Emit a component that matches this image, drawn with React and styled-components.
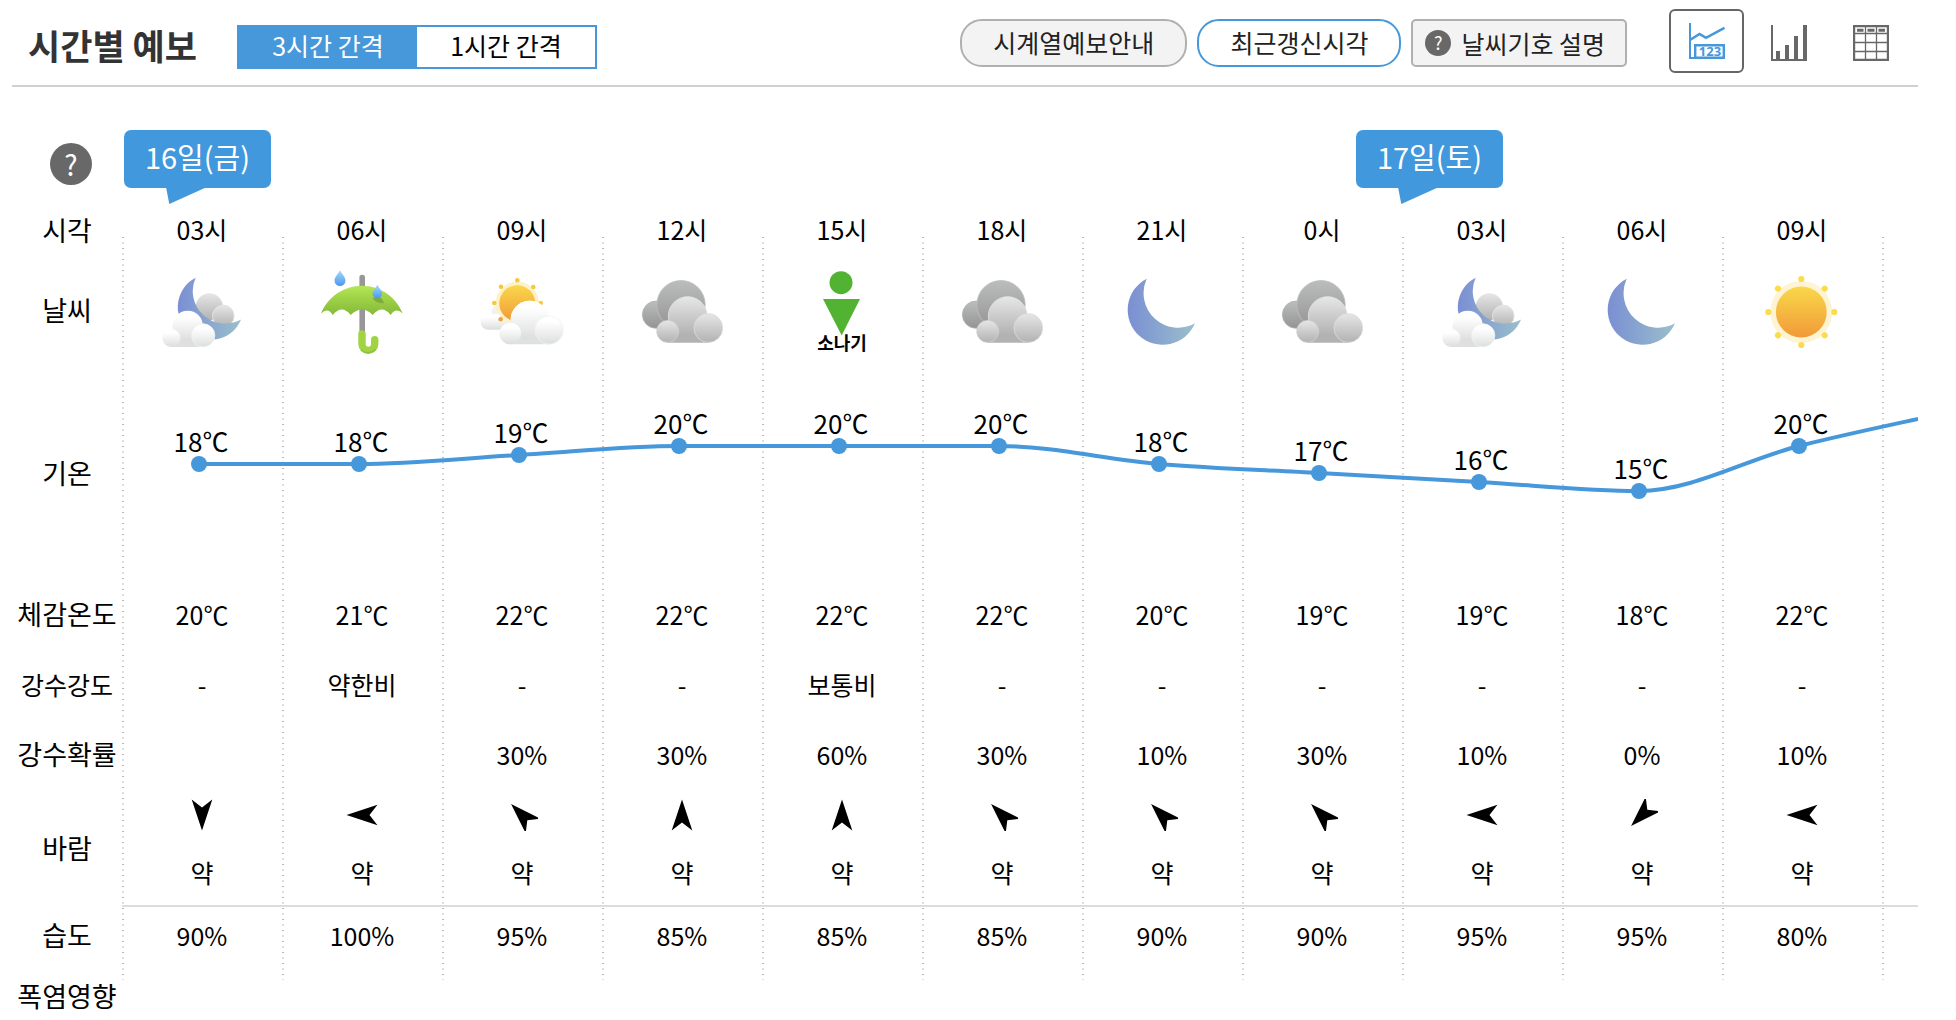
import { useState } from "react";
import styled, { createGlobalStyle } from "styled-components";

const COLUMN_WIDTH = 160;

const forecasts = [
  { time: "03시", weather: "moonCloud", temp: 18, feel: 20, rain: "-", pop: "", wind: 180, humidity: 90 },
  { time: "06시", weather: "rain", temp: 18, feel: 21, rain: "약한비", pop: "", wind: 270, humidity: 100 },
  { time: "09시", weather: "sunCloud", temp: 19, feel: 22, rain: "-", pop: "30%", wind: 315, humidity: 95 },
  { time: "12시", weather: "cloudy", temp: 20, feel: 22, rain: "-", pop: "30%", wind: 0, humidity: 85 },
  { time: "15시", weather: "shower", temp: 20, feel: 22, rain: "보통비", pop: "60%", wind: 0, humidity: 85 },
  { time: "18시", weather: "cloudy", temp: 20, feel: 22, rain: "-", pop: "30%", wind: 315, humidity: 85 },
  { time: "21시", weather: "moon", temp: 18, feel: 20, rain: "-", pop: "10%", wind: 315, humidity: 90 },
  { time: "0시", weather: "cloudy", temp: 17, feel: 19, rain: "-", pop: "30%", wind: 315, humidity: 90 },
  { time: "03시", weather: "moonCloud", temp: 16, feel: 19, rain: "-", pop: "10%", wind: 270, humidity: 95 },
  { time: "06시", weather: "moon", temp: 15, feel: 18, rain: "-", pop: "0%", wind: 225, humidity: 95 },
  { time: "09시", weather: "sun", temp: 20, feel: 22, rain: "-", pop: "10%", wind: 270, humidity: 80 },
];
const nextTemp = 24;

const MOON_PATH =
  "M28.7 11.7 A35 35 0 1 0 77 56.3 A34.6 34.6 0 0 1 28.7 11.7 Z";

function IconDefs() {
  return (
    <HiddenSvg aria-hidden="true">
      <defs>
        <linearGradient id="moonFill">
          <stop offset="0" stopColor="#7a8fd3" />
          <stop offset="1" stopColor="#9abfcb" />
        </linearGradient>
        <linearGradient id="sunFill" x2="0" y2="1">
          <stop offset="0" stopColor="#f9d84a" />
          <stop offset="1" stopColor="#f19a38" />
        </linearGradient>
        <linearGradient id="whiteFill" x2="0" y2="1">
          <stop offset="0.2" stopColor="#ffffff" />
          <stop offset="1" stopColor="#dcdedd" />
        </linearGradient>
        <linearGradient id="lightFill" x2="0" y2="1">
          <stop offset="0" stopColor="#e6e6e6" />
          <stop offset="1" stopColor="#b2b2b2" />
        </linearGradient>
        <linearGradient id="darkFill" x2="0" y2="1">
          <stop offset="0" stopColor="#bbbdbc" />
          <stop offset="1" stopColor="#949494" />
        </linearGradient>
        <linearGradient id="greenFill" x2="0" y2="1">
          <stop offset="0" stopColor="#b4e85a" />
          <stop offset="0.3" stopColor="#a5d84a" />
          <stop offset="1" stopColor="#85b93a" />
        </linearGradient>
        <linearGradient id="dropFill" x2="0" y2="1">
          <stop offset="0" stopColor="#a8dbfb" />
          <stop offset="1" stopColor="#4a96ee" />
        </linearGradient>
      </defs>
    </HiddenSvg>
  );
}

function MoonIcon() {
  return <path d={MOON_PATH} fill="url(#moonFill)" />;
}

function MoonCloudIcon() {
  return (
    <>
      <circle cx="51.3" cy="39.7" r="13.5" fill="url(#lightFill)" />
      <circle cx="65.3" cy="49" r="10.8" fill="url(#lightFill)" stroke="#e2e2e2" strokeWidth="1" />
      <path d={MOON_PATH} fill="url(#moonFill)" transform="translate(10.7 -0.3) scale(0.94)" />
      <circle cx="29.7" cy="58.9" r="15.2" fill="url(#whiteFill)" />
      <path d="M13 65 H46 V80 H13 Z" fill="#dfdfdf" />
      <path d="M15 60 H44 V72 H15 Z" fill="#ebecec" />
      <circle cx="29.7" cy="58.9" r="14.6" fill="url(#whiteFill)" />
      <circle cx="13.3" cy="71" r="9" fill="url(#whiteFill)" />
      <circle cx="45.2" cy="68.4" r="11.6" fill="url(#whiteFill)" stroke="#f4f4f4" strokeWidth="0.8" />
    </>
  );
}

function RainIcon() {
  return (
    <>
      <path d="M44.2 10.5 V66" stroke="#989696" strokeWidth="5.6" strokeLinecap="round" />
      <path
        d="M44 67 V77 A6.35 6.35 0 0 0 56.7 77 V72.8"
        fill="none"
        stroke="#a0d443"
        strokeWidth="7.4"
        strokeLinecap="round"
      />
      <path d="M43 83 Q50 89 58 82" fill="none" stroke="#8cc23c" strokeWidth="1.6" />
      <path
        d="M3 46.5 C9 31 25 18.7 44 18.7 C63 18.7 79 31 84.7 46.5 Q78 40 72.7 48 Q64 37 54.7 48 Q44 37 32.7 48 Q24 37 14.7 48 Q10 40 3 46.5 Z"
        fill="url(#greenFill)"
      />
      <path d="M54.5 31 Q58 37 66 36 Q64 31 61 29 Z" fill="#7eac3a" />
      <path d="M22 3.3 C24 7 27.5 10 27.5 13.6 A5.5 5.5 0 0 1 16.5 13.6 C16.5 10 20 7 22 3.3 Z" fill="url(#dropFill)" />
      <path d="M59.3 17.7 C61 21 64 23.5 64 26.7 A4.7 4.7 0 0 1 54.6 26.7 C54.6 23.5 57.6 21 59.3 17.7 Z" fill="url(#dropFill)" />
    </>
  );
}

function SunCloudIcon() {
  return (
    <>
      <circle cx="21" cy="45" r="7.5" fill="#f1f1f1" />
      <rect x="2.5" y="47" width="28" height="15.7" rx="7.8" fill="url(#whiteFill)" />
      <circle cx="39.3" cy="36.3" r="21.7" fill="#fdf1c9" />
      <circle cx="39.3" cy="36.3" r="18" fill="url(#sunFill)" />
      <g fill="#f8c838">
        <circle cx="39.3" cy="13.3" r="2.3" />
        <circle cx="23" cy="19.7" r="2.3" />
        <circle cx="55.3" cy="20" r="2.3" />
        <circle cx="16.3" cy="36" r="2.3" />
        <circle cx="62.7" cy="36" r="2.3" />
        <circle cx="22.7" cy="52.3" r="2.3" fill="#f2a33b" />
      </g>
      <circle cx="51.7" cy="53" r="19.2" fill="url(#whiteFill)" />
      <path d="M32 62 H71 V77.3 H32 Z" fill="#dfe0e0" />
      <circle cx="51.7" cy="53" r="19.2" fill="url(#whiteFill)" />
      <circle cx="32.3" cy="66.5" r="10.8" fill="url(#whiteFill)" />
      <circle cx="71.2" cy="63" r="14.2" fill="url(#whiteFill)" stroke="#f1f1f1" strokeWidth="0.8" />
    </>
  );
}

function CloudyIcon() {
  return (
    <>
      <circle cx="18" cy="47.7" r="13.6" fill="url(#darkFill)" stroke="#b0b0b0" strokeWidth="0.8" />
      <circle cx="43" cy="37.7" r="24.2" fill="url(#darkFill)" stroke="#bfbfbf" strokeWidth="0.8" />
      <circle cx="49.7" cy="49" r="19.3" fill="url(#lightFill)" stroke="#dedede" strokeWidth="1" />
      <path d="M29.7 60 H70.3 V75.7 H29.7 Z" fill="#b1b2b1" />
      <path d="M39 50 H60 V66 H39 Z" fill="#bcbdbd" />
      <circle cx="49.7" cy="49" r="18.8" fill="url(#lightFill)" />
      <circle cx="29.7" cy="64.4" r="11" fill="url(#lightFill)" stroke="#d2d2d2" strokeWidth="0.8" />
      <circle cx="70.3" cy="61" r="14.4" fill="url(#lightFill)" stroke="#dcdcdc" strokeWidth="0.8" />
    </>
  );
}

function ShowerIcon() {
  return (
    <>
      <circle cx="43" cy="15.7" r="11.5" fill="#52b332" />
      <path d="M25 32 H62 L43.7 68.5 Z" fill="#52b332" />
      <ShowerText x="44" y="83" textAnchor="middle">
        소나기
      </ShowerText>
    </>
  );
}

function SunIcon() {
  const rays = [0, 45, 90, 135, 180, 225, 270, 315];
  return (
    <>
      <circle cx="43.3" cy="45" r="31" fill="#fef3d2" />
      <circle cx="43.3" cy="45" r="25.4" fill="url(#sunFill)" />
      {rays.map((angle) => (
        <circle key={angle} cx="43.3" cy="12" r="3.1" fill="#fbdc4b" transform={`rotate(${angle} 43.3 45)`} />
      ))}
    </>
  );
}

const weatherIcons = {
  moon: { Icon: MoonIcon, label: "맑음" },
  moonCloud: { Icon: MoonCloudIcon, label: "구름많음" },
  rain: { Icon: RainIcon, label: "비" },
  sunCloud: { Icon: SunCloudIcon, label: "구름많음" },
  cloudy: { Icon: CloudyIcon, label: "흐림" },
  shower: { Icon: ShowerIcon, label: "소나기" },
  sun: { Icon: SunIcon, label: "맑음" },
};

function ChartViewIcon() {
  return (
    <svg width="36" height="36" viewBox="0 0 36 36" fill="none" stroke="#4698da">
      <path d="M1 0 V35 H36" strokeWidth="2" />
      <path d="M1 17 L10.5 11 L17 14.8 L35.5 4.8" strokeWidth="2.6" />
      <path d="M6.2 22.2 H34.8 V34.8 H6.2 Z" strokeWidth="2.4" />
      <ViewIconText x="21" y="33" textAnchor="middle">
        123
      </ViewIconText>
    </svg>
  );
}

function BarViewIcon() {
  return (
    <svg width="36" height="36" viewBox="0 0 36 36" fill="#686868">
      <path d="M0 0 H2 V34 H32 V0 H36 V36 H0 Z" />
      <path d="M5 26 H9 V36 H5 Z M14 20 H18 V36 H14 Z M23 11 H27 V36 H23 Z" />
    </svg>
  );
}

function TableViewIcon() {
  return (
    <svg width="36" height="36" viewBox="0 0 36 36" fill="none" stroke="#686868">
      <path d="M1 1 H35 V35 H1 Z" strokeWidth="2.4" />
      <path d="M12.5 2 V35 M23.5 2 V35 M1 8.5 H35 M1 17.5 H35 M1 26.5 H35" strokeWidth="1.3" />
      <path d="M4 5.2 H10.5 M14.5 5.2 H21.5 M25.5 5.2 H32" strokeWidth="3" />
    </svg>
  );
}

const views = [
  { id: "chart", label: "그래프와 숫자", Icon: ChartViewIcon },
  { id: "bar", label: "막대 그래프", Icon: BarViewIcon },
  { id: "table", label: "표", Icon: TableViewIcon },
];

// monotone cubic, so the line never overshoots the plotted temperatures
function getLinePath(points) {
  const slopes = points.slice(1).map((p, i) => (p.y - points[i].y) / COLUMN_WIDTH);
  const tangents = points.map((_, i) => {
    if (i === 0) return slopes[0];
    if (i === points.length - 1) return slopes[i - 1];
    const a = slopes[i - 1];
    const b = slopes[i];
    return (Math.sign(a) + Math.sign(b)) * Math.min(Math.abs(a), Math.abs(b), Math.abs(a + b) / 4);
  });
  const third = COLUMN_WIDTH / 3;
  return points.slice(1).reduce((path, p, i) => {
    const prev = points[i];
    return `${path} C${prev.x + third} ${prev.y + tangents[i] * third} ${p.x - third} ${p.y - tangents[i + 1] * third} ${p.x} ${p.y}`;
  }, `M${points[0].x} ${points[0].y}`);
}

function TemperatureChart() {
  const points = [...forecasts.map((f) => f.temp), nextTemp].map((temp, i) => ({
    x: 77 + i * COLUMN_WIDTH,
    y: 96 - (temp - 18) * 9,
  }));

  return (
    <ChartSvg width="1920" height="212" viewBox="0 0 1920 212" role="img" aria-label="기온">
      <path d={getLinePath(points)} fill="none" stroke="#4698da" strokeWidth="4" />
      {forecasts.map((forecast, i) => (
        <g key={i}>
          <circle cx={points[i].x} cy={points[i].y} r="8" fill="#4698da" />
          <text x={points[i].x + 2} y={points[i].y - 12} textAnchor="middle">
            {forecast.temp}℃
          </text>
        </g>
      ))}
    </ChartSvg>
  );
}

function App() {
  const [interval, setInterval] = useState(3);
  const [view, setView] = useState("chart");

  return (
    <Page>
      <GlobalStyle />
      <IconDefs />
      <Header>
        <HeaderLeft>
          <Title>시간별 예보</Title>
          <IntervalGroup>
            <IntervalButton type="button" $active={interval === 3} onClick={() => setInterval(3)}>
              3시간 간격
            </IntervalButton>
            <IntervalButton type="button" $active={interval === 1} onClick={() => setInterval(1)}>
              1시간 간격
            </IntervalButton>
          </IntervalGroup>
        </HeaderLeft>
        <HeaderRight>
          <PillButton type="button">시계열예보안내</PillButton>
          <PillButton type="button" $primary>
            최근갱신시각
          </PillButton>
          <LegendButton type="button">
            <SmallHelp>?</SmallHelp>
            날씨기호 설명
          </LegendButton>
          <ViewGroup>
            {views.map(({ id, label, Icon }) => (
              <ViewButton
                key={id}
                type="button"
                aria-label={label}
                $active={view === id}
                onClick={() => setView(id)}
              >
                <Icon />
              </ViewButton>
            ))}
          </ViewGroup>
        </HeaderRight>
      </Header>

      <ForecastWrapper>
        <GridLines />
        <ForecastTable>
          <colgroup>
            <LabelCol />
            {forecasts.map((_, i) => (
              <HourCol key={i} />
            ))}
            <HourCol />
          </colgroup>
          <thead>
            <Row $height={120}>
              <HelpCell>
                <HelpButton type="button" aria-label="도움말">
                  ?
                </HelpButton>
              </HelpCell>
              <DayCell colSpan={8}>
                <DayBubble>16일(금)</DayBubble>
              </DayCell>
              <DayCell colSpan={4}>
                <DayBubble $early>17일(토)</DayBubble>
              </DayCell>
            </Row>
            <Row $height={47}>
              <LabelCell scope="row">시각</LabelCell>
              {forecasts.map((f, i) => (
                <HourCell key={i} scope="col">
                  {f.time}
                </HourCell>
              ))}
            </Row>
          </thead>
          <tbody>
            <Row $height={114}>
              <LabelCell scope="row">날씨</LabelCell>
              {forecasts.map((f, i) => {
                const { Icon, label } = weatherIcons[f.weather];
                return (
                  <DrawingCell key={i}>
                    <WeatherSvg viewBox="0 0 88 88" role="img" aria-label={label}>
                      <Icon />
                    </WeatherSvg>
                  </DrawingCell>
                );
              })}
            </Row>
            <Row $height={212}>
              <LabelCell scope="row">기온</LabelCell>
              <DrawingCell colSpan={12}>
                <TemperatureChart />
              </DrawingCell>
            </Row>
            <Row $height={70}>
              <LabelCell scope="row">체감온도</LabelCell>
              {forecasts.map((f, i) => (
                <Cell key={i}>{f.feel}℃</Cell>
              ))}
            </Row>
            <Row $height={70}>
              <LabelCell scope="row" $small>
                강수강도
              </LabelCell>
              {forecasts.map((f, i) => (
                <Cell key={i}>{f.rain}</Cell>
              ))}
            </Row>
            <Row $height={70}>
              <LabelCell scope="row">강수확률</LabelCell>
              {forecasts.map((f, i) => (
                <Cell key={i}>{f.pop}</Cell>
              ))}
            </Row>
            <Row $height={117}>
              <LabelCell scope="row">바람</LabelCell>
              {forecasts.map((f, i) => (
                <WindCell key={i}>
                  <Wind>
                    <svg width="32" height="32" viewBox="0 0 32 32">
                      <path d="M16 0.5 L26.3 31.5 L16 23.5 L5.7 31.5 Z" transform={`rotate(${f.wind} 16 16)`} />
                    </svg>
                    약
                  </Wind>
                </WindCell>
              ))}
              <WindCell />
            </Row>
            <Row $height={58}>
              <LabelCell scope="row">습도</LabelCell>
              {forecasts.map((f, i) => (
                <Cell key={i}>{f.humidity}%</Cell>
              ))}
            </Row>
            <Row $height={55}>
              <LastLabelCell scope="row">폭염영향</LastLabelCell>
            </Row>
          </tbody>
        </ForecastTable>
      </ForecastWrapper>
    </Page>
  );
}

const GlobalStyle = createGlobalStyle`
  * {
    box-sizing: border-box;
  }
  body {
    margin: 0;
    background-color: #fff;
    color: #000;
    font-family: "Noto Sans CJK KR", sans-serif;
    font-size: 25px;
  }
  button {
    margin: 0;
    padding: 0;
    font: inherit;
    cursor: pointer;
  }
`;

const HiddenSvg = styled.svg`
  position: absolute;
  width: 0;
  height: 0;
`;

const Page = styled.main`
  padding: 0 38px 0 12px;
`;

const Header = styled.header`
  display: flex;
  justify-content: space-between;
  align-items: center;
  height: 87px;
  padding: 0 10px 0 16px;
  border-bottom: 2px solid #d0d0d0;
`;

const HeaderLeft = styled.div`
  display: flex;
  align-items: center;
  gap: 40px;
  padding-top: 9px;
`;

const Title = styled.h1`
  margin: 0;
  padding-bottom: 4px;
  color: #333;
  font-size: 35px;
  font-weight: 700;
  line-height: 40px;
`;

const IntervalGroup = styled.div`
  display: flex;
  border: 2px solid #4698da;
`;

const IntervalButton = styled.button`
  width: 178px;
  height: 40px;
  padding-bottom: 4px;
  border: none;
  background-color: ${({ $active }) => ($active ? "#4698da" : "#fff")};
  color: ${({ $active }) => ($active ? "#fff" : "#000")};
  line-height: 36px;
`;

const HeaderRight = styled.div`
  display: flex;
  align-items: center;
  gap: 10px;
`;

const PillButton = styled.button`
  height: 48px;
  padding: 0 31px 2px;
  border: 2px solid ${({ $primary }) => ($primary ? "#4698da" : "#b0b0b0")};
  border-radius: 22px;
  background-color: ${({ $primary }) => ($primary ? "#fff" : "#f3f3f3")};
  color: #222;
  line-height: 40px;
`;

const LegendButton = styled.button`
  display: flex;
  align-items: center;
  gap: 10px;
  height: 48px;
  padding: 0 20px 0 12px;
  border: 2px solid #b0b0b0;
  border-radius: 5px;
  background-color: #f3f3f3;
  color: #222;
`;

const SmallHelp = styled.span`
  width: 26px;
  height: 26px;
  border-radius: 50%;
  background-color: #686868;
  color: #fff;
  font-size: 18px;
  line-height: 25px;
  text-align: center;
`;

const ViewGroup = styled.div`
  display: flex;
  gap: 7px;
  margin-left: 32px;
  padding-bottom: 3px;
`;

const ViewButton = styled.button`
  display: flex;
  justify-content: center;
  align-items: center;
  width: 75px;
  height: 64px;
  padding-top: ${({ $active }) => ($active ? "0" : "4px")};
  border: 2px solid ${({ $active }) => ($active ? "#666" : "transparent")};
  border-radius: 6px;
  background-color: #fff;
`;

const ViewIconText = styled.text`
  fill: #4698da;
  stroke: none;
  font-family: "Open Sans", sans-serif;
  font-size: 13px;
  font-weight: 700;
`;

const ForecastWrapper = styled.section`
  position: relative;
  isolation: isolate;
  overflow: hidden;
`;

const GridLines = styled.div`
  position: absolute;
  z-index: -1;
  top: 150px;
  right: 0;
  bottom: 40px;
  left: 110px;
  background-image: conic-gradient(from 270deg at 2px 1px, #b8b8b8 25%, transparent 0),
    conic-gradient(from 270deg at 2px 2px, #dedede 25%, transparent 0);
  background-position: 0 0, 0 5px;
  background-size: ${COLUMN_WIDTH}px 11px;
`;

const ForecastTable = styled.table`
  width: 2030px;
  table-layout: fixed;
  border-spacing: 0;
`;

const LabelCol = styled.col`
  width: 110px;
`;

const HourCol = styled.col`
  width: ${COLUMN_WIDTH}px;
`;

const Row = styled.tr`
  height: ${({ $height }) => $height}px;
`;

const Cell = styled.td`
  padding: 0 0 2px;
  text-align: center;
  line-height: 36px;
`;

const DrawingCell = styled.td`
  padding: 0;
`;

const LabelCell = styled.th`
  padding: 0 0 2px;
  font-size: ${({ $small }) => ($small ? "25px" : "27px")};
  font-weight: 400;
  line-height: 36px;
  white-space: nowrap;
`;

const LastLabelCell = styled(LabelCell)`
  padding: 7px 0 0;
`;

const HourCell = styled.th`
  padding: 0 0 4px;
  font-weight: 400;
  line-height: 36px;
`;

const HelpCell = styled.td`
  padding: 56px 0 0 38px;
  vertical-align: top;
`;

const HelpButton = styled.button`
  display: block;
  width: 42px;
  height: 42px;
  border: none;
  border-radius: 50%;
  background-color: #686868;
  color: #fff;
  font-size: 28px;
  line-height: 40px;
`;

const DayCell = styled.th`
  padding: 43px 0 0 2px;
  text-align: left;
  font-weight: 400;
  vertical-align: top;
`;

const DayBubble = styled.div`
  position: relative;
  width: 147px;
  height: 58px;
  margin-left: ${({ $early }) => ($early ? "-48px" : "0")};
  border-radius: 7px;
  background-color: #4298dc;
  color: #fff;
  font-size: 29px;
  line-height: 53px;
  text-align: center;

  &::after {
    content: "";
    position: absolute;
    top: 57px;
    left: 42px;
    width: 41px;
    height: 17px;
    background-color: #4298dc;
    clip-path: polygon(0 0, 100% 0, 8% 100%);
  }
`;

const WeatherSvg = styled.svg`
  display: block;
  width: 88px;
  height: 88px;
  margin: 0 auto;
`;

const ShowerText = styled.text`
  font-size: 18px;
  font-weight: 700;
`;

const ChartSvg = styled.svg`
  display: block;
  font-size: 26px;
`;

const WindCell = styled(Cell)`
  border-bottom: 2px solid #dcdcdc;
  vertical-align: top;
`;

const Wind = styled.div`
  display: flex;
  flex-direction: column;
  align-items: center;
  gap: 23px;
  padding-top: 9px;
`;

export default App;
